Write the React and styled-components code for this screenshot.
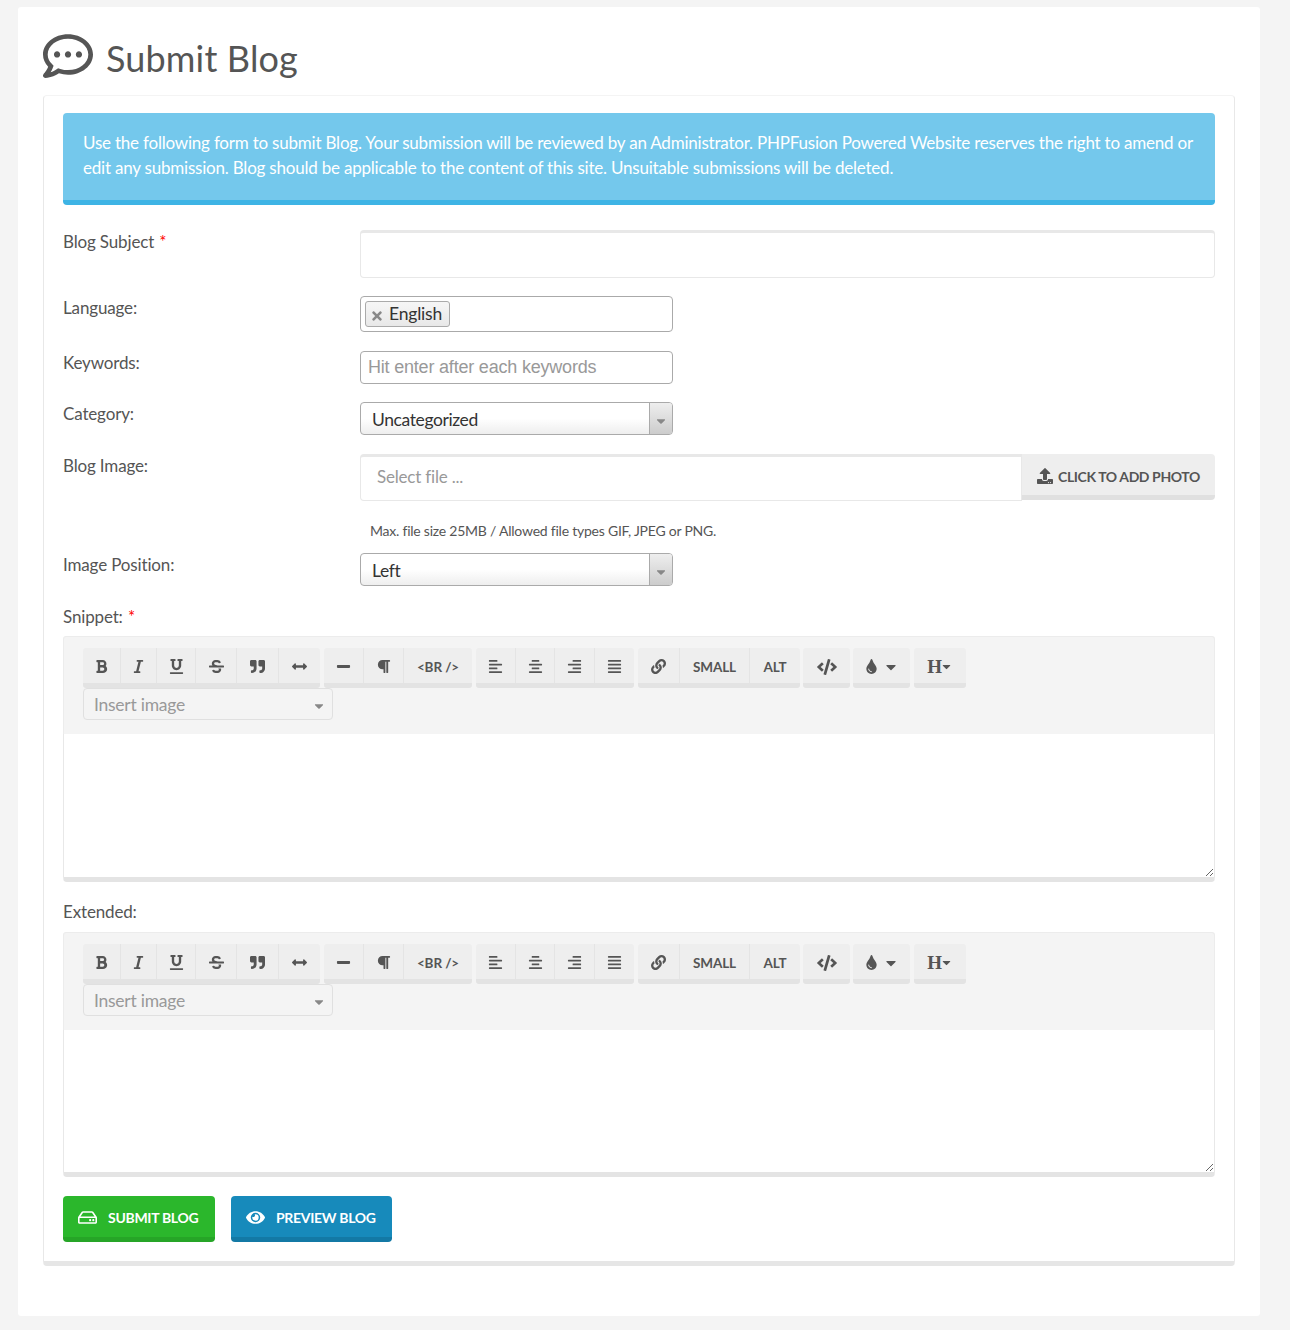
import React from "react";
import styled, { createGlobalStyle } from "styled-components";
import {
  FaRegCommentDots, FaBold, FaItalic, FaUnderline, FaStrikethrough, FaQuoteRight, FaArrowsAltH,
  FaMinus, FaParagraph, FaAlignLeft, FaAlignCenter, FaAlignRight, FaAlignJustify, FaLink, FaCode,
  FaTint, FaUpload, FaRegHdd, FaEye, FaTimes, FaCaretDown,
} from "react-icons/fa";

const Global = createGlobalStyle`
  html, body { margin: 0; padding: 0; background: #f4f4f4; }
  body { font-family: "Lato", "Open Sans", sans-serif; color: #555; }
  * { box-sizing: border-box; }
`;
const Page = styled.div`height: 1330px; padding: 7px 30px 14px 18px;`;
const Panel = styled.main`background: #fff; border-radius: 3px; height: 1309px; padding: 0 25px;`;
const TitleRow = styled.header`display: flex; align-items: center; height: 88px; gap: 13px; padding-top: 13px;
  svg { width: 50px; height: 50px; color: #555; flex: none; margin-top: -3px; }`;
const Title = styled.h1`margin: 0; font-size: 36px; font-weight: 400; letter-spacing: .15px; color: #555; line-height: 44px;`;
const Card = styled.section`height: 1171px; background: #fff; border: 1px solid #e8e8e8; border-top-color: #f4f4f4; border-bottom: 5px solid #e6e6e6;
  border-radius: 4px; padding: 17px 19px 19px;`;
const Alert = styled.div`background: #74c8ec; border-bottom: 5px solid #3eb4e5; border-radius: 4px; color: #fff; height: 92px;
  padding: 17px 20px; font-size: 17px; line-height: 25px; letter-spacing: -0.21px; margin-bottom: 25px;`;
const Row = styled.div`display: grid; grid-template-columns: 297px 1fr; margin-bottom: ${p => p.$mb}px;`;
const Label = styled.label`font-size: 17px; line-height: 23px; letter-spacing: -0.15px; color: #555;`;
const Star = styled.span`color: #f00; margin-left: 1px;`;
const SubjectInput = styled.input`display: block; width: 100%; height: 48px; background: #fff; border: 1px solid #e8e8e8; border-top-width: 3px; border-radius: 4px; outline: none;`;
const TagBox = styled.div`width: 313px; height: 36px; border: 1px solid #aaa; border-radius: 4px; padding: 4px; display: flex; background: #fff;`;
const Chip = styled.span`display: flex; align-items: center; gap: 5px; width: 85px; height: 26px; padding: 0 0 2px 4px; border: 1px solid #aaa; border-radius: 3px;
  background: linear-gradient(#f6f6f6, #e8e8e8); font-size: 17.5px; color: #333; letter-spacing: -0.2px;
  svg { width: 14px; height: 14px; color: #888; margin-top: 5px; }`;
const TextInput = styled.input`display: block; width: 313px; height: 33px; border: 1px solid #aaa; border-radius: 4px; padding: 0 7px; font: 18px "Liberation Sans", Arial, sans-serif; letter-spacing: -0.2px; outline: none;
  &::placeholder { color: #999; opacity: 1; }`;
const SelectBox = styled.div`width: 313px; height: 33px; border: 1px solid #aaa; border-radius: 4px; display: flex; overflow: hidden; background: linear-gradient(#fff 50%, #eee);`;
const SelectValue = styled.span`flex: 1; padding: 4px 11px 0; font-size: 17.5px; line-height: 25px; color: #333; letter-spacing: -0.4px;`;
const SelectArrow = styled.span`width: 23px; border-left: 1px solid #aaa; background: linear-gradient(#eee, #ccc); display: flex; align-items: center; justify-content: center;
  svg { width: 14px; height: 14px; color: #888; margin-top: 4px; }`;
const FileRow = styled.div`display: flex; align-items: flex-start;`;
const FileInput = styled.div`flex: 1; height: 47px; border: 1px solid #e8e8e8; border-top-width: 3px; border-radius: 4px 0 0 4px; padding: 7px 16px; font-size: 17px; line-height: 25px; letter-spacing: -0.2px; color: #999;`;
const FileButton = styled.button`width: 193px; height: 46px; background: #eee; border: 0; border-bottom: 5px solid #e0e0e0; border-radius: 0 4px 4px 0; display: flex; align-items: center; justify-content: center; gap: 5px;
  font: 700 14px "Lato", sans-serif; letter-spacing: -0.4px; color: #555; padding: 3px 0 0;
  svg { width: 16px; height: 16px; }`;
const Help = styled.div`height: 52px; padding: 20px 0 0 10px; font-size: 14px; line-height: 20px; letter-spacing: -0.23px; color: #555;`;
const BlockLabel = styled(Label)`display: block; margin-bottom: ${p => p.$mb}px;`;
const Editor = styled.div`margin-bottom: ${p => p.$mb}px;`;
const Toolbar = styled.div`height: 98px; background: #f4f4f4; border: 1px solid #ececec; border-bottom: 0; border-radius: 3px 3px 0 0; padding: 11px 19px 0;`;
const ToolRow = styled.div`display: flex; gap: 3px; height: 40px;`;
const Group = styled.div`display: flex; height: 40px; margin-right: ${p => p.$mr}px; background: #eee; border-bottom: 5px solid #e3e3e3; border-radius: 3px;`;
const Tool = styled.button`width: ${p => p.$w}px; height: 35px; padding: 2px 0 0; background: none; border: 0; border-left: 1px solid #e4e4e4; display: flex; align-items: center; justify-content: center; gap: 7px;
  color: #555; font: 700 13.5px "Lato", sans-serif; letter-spacing: -0.1px;
  &:first-child { border-left: 0; }
  svg { width: 15px; height: 15px; }
  svg.wide { width: 20px; height: 16px; }
  svg.caret { width: 16px; height: 16px; margin-left: -3px; }`;
const HeadMark = styled.span`font: 700 19px "Liberation Serif", serif; display: flex; align-items: center;
  svg { width: 13px !important; height: 13px !important; margin-left: -2px; }`;
const InsertSelect = styled.div`width: 250px; height: 32px; border: 1px solid #e0e0e0; border-radius: 4px; display: flex; align-items: center; justify-content: space-between; padding: 0 6px 0 10px;
  color: #999; font-size: 17.5px; letter-spacing: -0.25px;
  svg { width: 14px; height: 14px; color: #888; margin-top: 3px; }`;
const Area = styled.textarea`display: block; width: 100%; height: ${p => p.$h}px; background: #fff; border: 1px solid #e8e8e8; border-top: 0; border-bottom: 5px solid #e4e4e4; border-radius: 0 0 4px 4px; outline: none; resize: vertical;`;
const Actions = styled.div`display: flex; gap: 16px;`;
const ActionButton = styled.button`width: ${p => p.$w}px; height: 46px; padding: 2px 0 0 15px; border: 0; border-bottom: 5px solid ${p => p.$dark}; border-radius: 4px; background: ${p => p.$bg}; color: #fff;
  display: flex; align-items: center; gap: 11px; font: 700 14px "Lato", sans-serif; letter-spacing: -0.3px;
  svg { width: 19px; height: 19px; margin-top: -1px; }`;

const groups = [
  [1, [[37, <FaBold />], [36, <FaItalic />], [39, <FaUnderline />], [41, <FaStrikethrough />], [42, <FaQuoteRight />], [42, <FaArrowsAltH />]]],
  [1, [[39, <FaMinus />], [40, <FaParagraph />], [69, "<BR />"]]],
  [1, [[39, <FaAlignLeft />], [39, <FaAlignCenter />], [40, <FaAlignRight />], [40, <FaAlignJustify />]]],
  [0, [[41, <FaLink />], [70, "SMALL"], [51, "ALT"]]],
  [0, [[47, <FaCode className="wide" />]]],
  [1, [[57, <><FaTint /><FaCaretDown className="caret" /></>]]],
  [0, [[52, <HeadMark>H<FaCaretDown /></HeadMark>]]],
];

function RichEditor({ h, mb }) {
  return (
    <Editor $mb={mb}>
      <Toolbar>
        <ToolRow>
          {groups.map(([mr, g], i) => (
            <Group key={i} $mr={mr}>{g.map(([w, c], j) => <Tool key={j} type="button" $w={w}>{c}</Tool>)}</Group>
          ))}
        </ToolRow>
        <InsertSelect>Insert image<FaCaretDown /></InsertSelect>
      </Toolbar>
      <Area $h={h} />
    </Editor>
  );
}

export default function App() {
  return (
    <Page>
      <Global />
      <Panel>
        <TitleRow><FaRegCommentDots /><Title>Submit Blog</Title></TitleRow>
        <Card>
          <Alert>Use the following form to submit Blog. Your submission will be reviewed by an Administrator. PHPFusion Powered Website reserves the right to amend or edit any submission. Blog should be applicable to the content of this site. Unsuitable submissions will be deleted.</Alert>
          <Row $mb={18}><Label>Blog Subject <Star>*</Star></Label><SubjectInput /></Row>
          <Row $mb={19}><Label>Language:</Label><TagBox><Chip><FaTimes />English</Chip></TagBox></Row>
          <Row $mb={18}><Label>Keywords:</Label><TextInput placeholder="Hit enter after each keywords" /></Row>
          <Row $mb={19}><Label>Category:</Label><SelectBox><SelectValue>Uncategorized</SelectValue><SelectArrow><FaCaretDown /></SelectArrow></SelectBox></Row>
          <Row $mb={0}>
            <Label>Blog Image:</Label>
            <div>
              <FileRow><FileInput>Select file ...</FileInput><FileButton type="button"><FaUpload />CLICK TO ADD PHOTO</FileButton></FileRow>
              <Help>Max. file size 25MB / Allowed file types GIF, JPEG or PNG.</Help>
            </div>
          </Row>
          <Row $mb={19}><Label>Image Position:</Label><SelectBox><SelectValue>Left</SelectValue><SelectArrow><FaCaretDown /></SelectArrow></SelectBox></Row>
          <BlockLabel $mb={8}>Snippet: <Star>*</Star></BlockLabel>
          <RichEditor h={148} mb={18} />
          <BlockLabel $mb={9}>Extended:</BlockLabel>
          <RichEditor h={147} mb={19} />
          <Actions>
            <ActionButton type="button" $w={152} $bg="#2bb72c" $dark="#26a527"><FaRegHdd />SUBMIT BLOG</ActionButton>
            <ActionButton type="button" $w={161} $bg="#178abb" $dark="#1379a5"><FaEye />PREVIEW BLOG</ActionButton>
          </Actions>
        </Card>
      </Panel>
    </Page>
  );
}
